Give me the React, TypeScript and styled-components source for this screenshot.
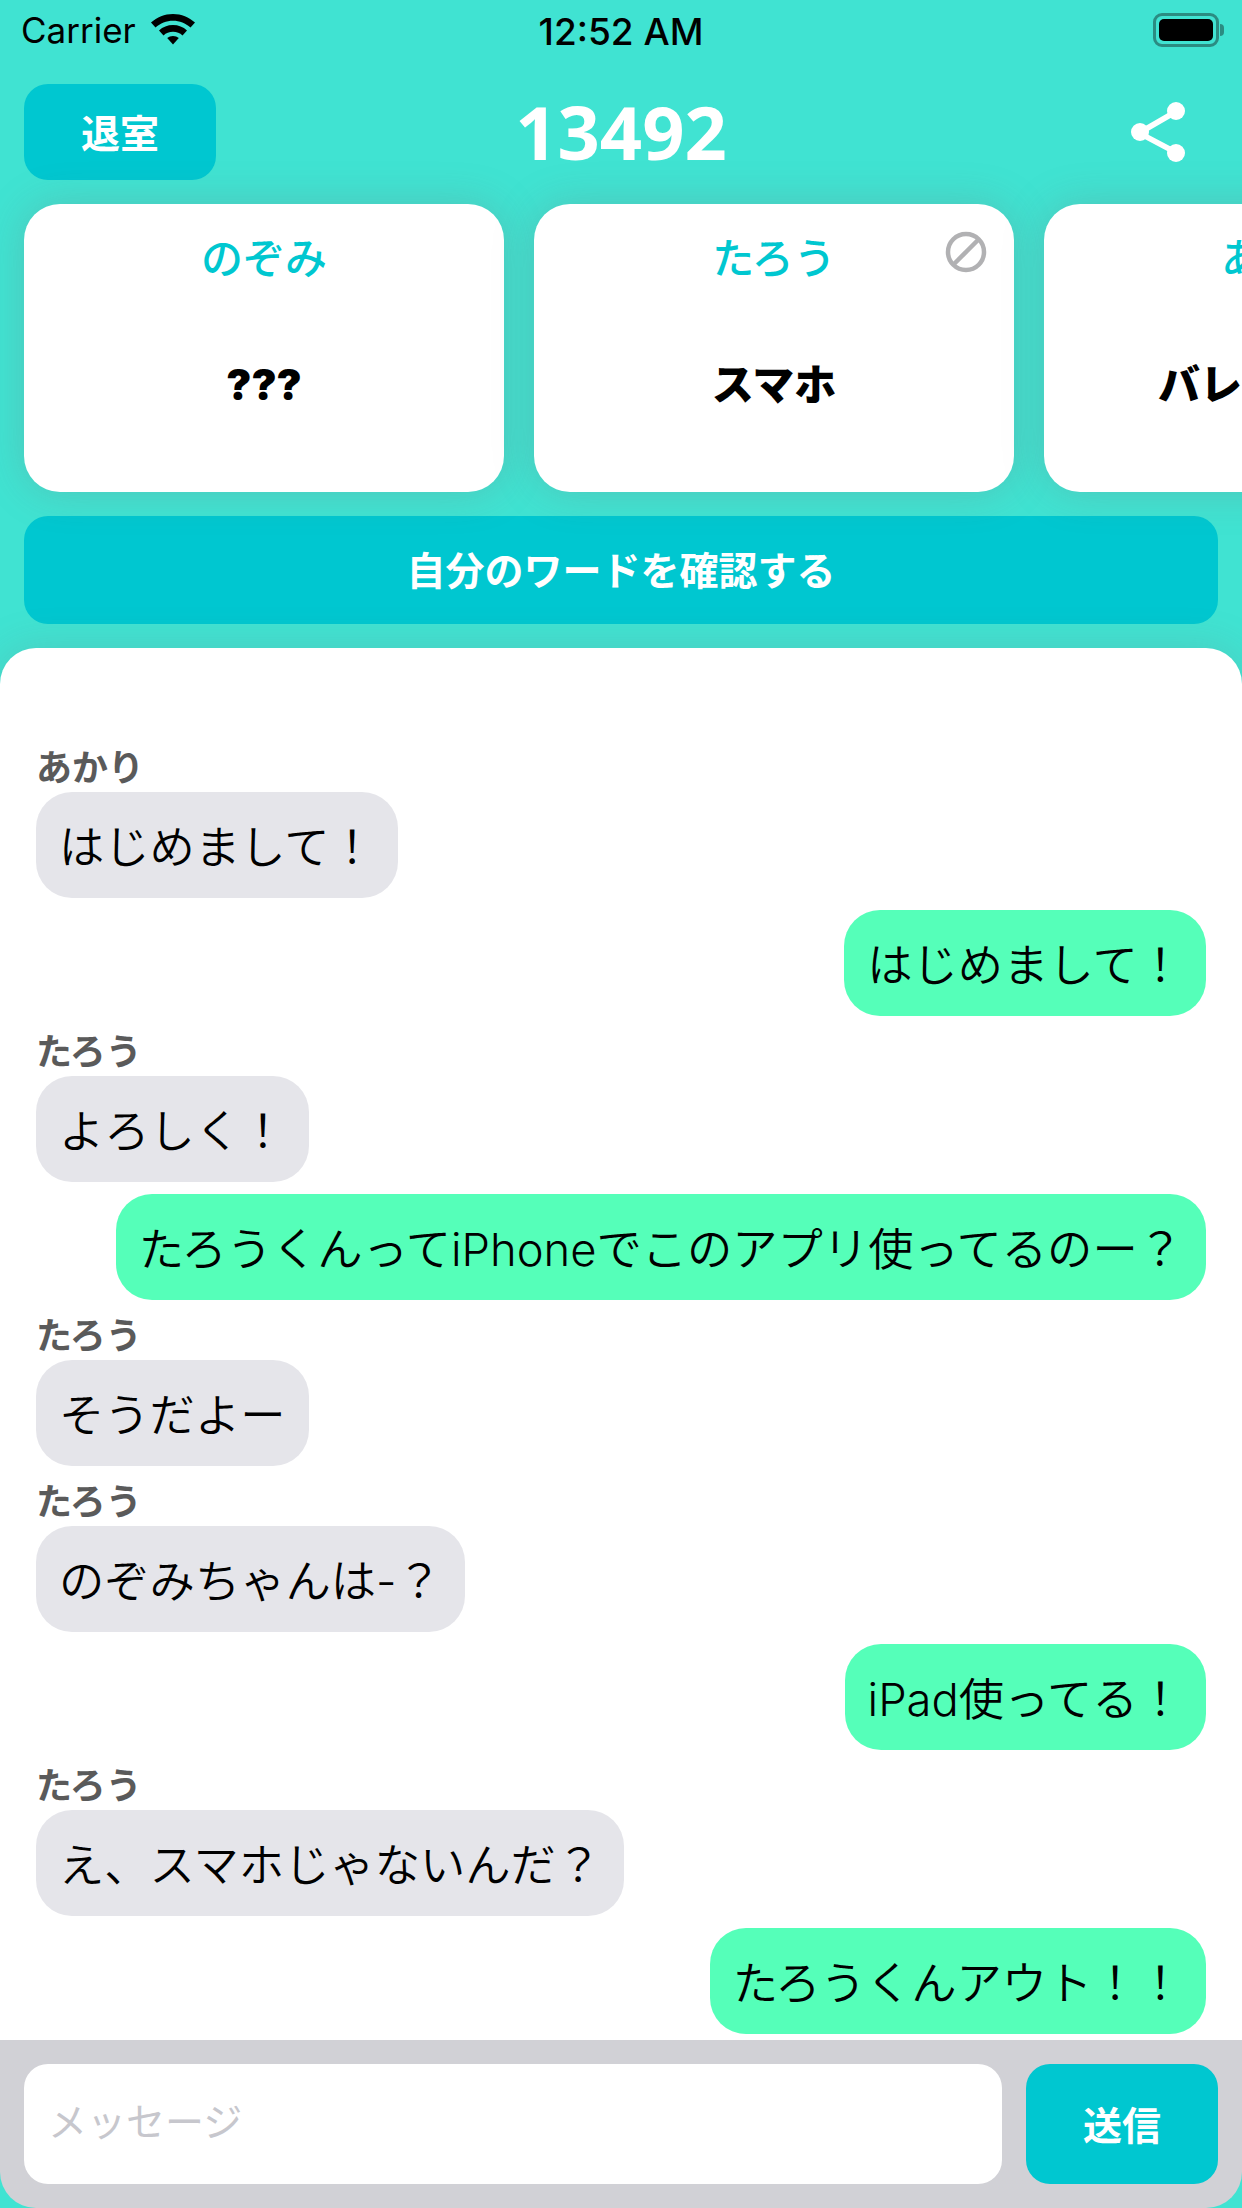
import styled, { createGlobalStyle } from "styled-components";

const TEAL = "#00c7d0";
const CJK = '"Inter", "Noto Sans CJK JP", sans-serif';

const players = [
  { name: "のぞみ", word: "???", banned: false },
  { name: "たろう", word: "スマホ", banned: true },
  { name: "あかり", word: "バレーボール", banned: false },
];

const messages = [
  { name: "あかり", text: "はじめまして！" },
  { text: "はじめまして！", mine: true },
  { name: "たろう", text: "よろしく！" },
  { text: "たろうくんってiPhoneでこのアプリ使ってるのー？", mine: true },
  { name: "たろう", text: "そうだよー" },
  { name: "たろう", text: "のぞみちゃんは-？" },
  { text: "iPad使ってる！", mine: true },
  { name: "たろう", text: "え、スマホじゃないんだ？" },
  { text: "たろうくんアウト！！", mine: true },
];

export default function App() {
  return (
    <Screen>
      <GlobalStyle />
      <StatusBar>
        <Carrier>
          Carrier
          <svg width="46" height="34" viewBox="0 0 46 34" fill="#000">
            <path d="M23 2C14.500 2 7 5.300 1 10.500L5.500 15.500C10.300 11.300 16.400 8.800 23 8.800C29.600 8.800 35.700 11.300 40.500 15.500L45 10.500C39 5.300 31.500 2 23 2Z" />
            <path d="M23 13C17.600 13 12.800 15 9 18.400L13.500 23.400C16 21.200 19.300 19.800 23 19.800C26.700 19.800 30 21.200 32.500 23.400L37 18.400C33.200 15 28.400 13 23 13Z" />
            <path d="M23 24C20.800 24 18.800 24.800 17.200 26.100L23 32.500L28.800 26.100C27.200 24.800 25.200 24 23 24Z" />
          </svg>
        </Carrier>
        <Clock>12:52 AM</Clock>
        <Battery>
          <BatteryFill />
          <BatteryCap />
        </Battery>
      </StatusBar>

      <Header>
        <LeaveButton>退室</LeaveButton>
        <RoomNumber>13492</RoomNumber>
        <ShareIcon width="60" height="62" viewBox="0 0 60 62">
          <g stroke="#fff" strokeWidth="5.500" fill="none">
            <path d="M49 10L11 32L49 52" />
          </g>
          <g fill="#fff">
            <circle cx="48" cy="10" r="9" />
            <circle cx="12" cy="31" r="9" />
            <circle cx="48" cy="52" r="9" />
          </g>
        </ShareIcon>
      </Header>

      <CardRow>
        {players.map((player) => (
          <Card key={player.name}>
            <PlayerName>{player.name}</PlayerName>
            <Word>{player.word}</Word>
            {player.banned && (
              <BanIcon width="42" height="42" viewBox="0 0 42 42" fill="none" stroke="#b1b1b3" strokeWidth="4.500">
                <circle cx="21" cy="21" r="18" />
                <path d="M8.500 33.500L33.500 8.500" />
              </BanIcon>
            )}
          </Card>
        ))}
      </CardRow>

      <CheckButton>自分のワードを確認する</CheckButton>

      <ChatPanel>
        <MessageList>
          {messages.map((message, i) => (
            <MessageRow key={i} $mine={!!message.mine}>
              {message.name && <Sender>{message.name}</Sender>}
              <Bubble $mine={!!message.mine}>{message.text}</Bubble>
            </MessageRow>
          ))}
        </MessageList>
      </ChatPanel>

      <Footer>
        <MessageInput>メッセージ</MessageInput>
        <SendButton>送信</SendButton>
      </Footer>
    </Screen>
  );
}

const GlobalStyle = createGlobalStyle`
  html, body {
    margin: 0;
    padding: 0;
    background: #40e3d2;
  }
`;

const Screen = styled.div`
  width: 1242px;
  height: 2208px;
  display: flex;
  flex-direction: column;
  overflow: hidden;
  background: #40e3d2;
  font-family: ${CJK};
`;

const StatusBar = styled.div`
  height: 60px;
  flex: none;
  display: grid;
  grid-template-columns: 1fr auto 1fr;
  align-items: center;
  padding: 0 21px;
  font-size: 35px;
  color: #000;
`;

const Carrier = styled.div`
  display: flex;
  align-items: center;
  gap: 14px;
  height: 60px;

  svg {
    margin-top: -2px;
  }
`;

const Clock = styled.div`
  font-weight: 500;
  font-size: 37px;
  margin-top: 2px;
`;

const Battery = styled.div`
  justify-self: end;
  position: relative;
  width: 66px;
  height: 34px;
  box-sizing: border-box;
  margin-right: 2px;
  border: 3px solid #2b8c82;
  border-radius: 9px;
  padding: 3px;
`;

const BatteryFill = styled.div`
  height: 100%;
  background: #000;
  border-radius: 5px;
`;

const BatteryCap = styled.div`
  position: absolute;
  right: -8px;
  top: 8px;
  width: 4px;
  height: 12px;
  background: #2b8c82;
  border-radius: 0 6px 6px 0;
`;

const Header = styled.div`
  height: 96px;
  flex: none;
  margin-top: 24px;
  padding: 0 24px;
  display: flex;
  align-items: center;
  justify-content: space-between;
  position: relative;
`;

const LeaveButton = styled.div`
  width: 192px;
  height: 96px;
  box-sizing: border-box;
  padding-bottom: 3px;
  background: ${TEAL};
  border-radius: 24px;
  color: #fff;
  font-size: 39px;
  font-weight: 700;
  display: flex;
  align-items: center;
  justify-content: center;
`;

const RoomNumber = styled.div`
  position: absolute;
  left: 0;
  right: 0;
  top: -3px;
  text-align: center;
  color: #fff;
  font-family: "Open Sans", sans-serif;
  font-size: 74px;
  font-weight: 700;
  pointer-events: none;
`;

const ShareIcon = styled.svg`
  margin-right: 30px;
`;

const CardRow = styled.div`
  display: flex;
  gap: 30px;
  flex: none;
  margin-top: 24px;
  padding-left: 24px;
`;

const Card = styled.div`
  position: relative;
  flex: none;
  width: 480px;
  height: 288px;
  box-sizing: border-box;
  padding-top: 27px;
  background: #fff;
  border-radius: 36px;
  box-shadow: 0 0 40px rgba(120, 120, 120, 0.28);
  text-align: center;
`;

const PlayerName = styled.div`
  color: ${TEAL};
  font-size: 42px;
  line-height: 56px;
  font-weight: 500;
`;

const Word = styled.div`
  margin-top: 70px;
  color: #000;
  font-size: 42px;
  line-height: 56px;
  font-weight: 900;
`;

const BanIcon = styled.svg`
  position: absolute;
  top: 27px;
  right: 27px;
`;

const CheckButton = styled.div`
  flex: none;
  height: 108px;
  box-sizing: border-box;
  padding-bottom: 4px;
  margin: 24px 24px 0;
  background: ${TEAL};
  border-radius: 24px;
  color: #fff;
  font-size: 39px;
  font-weight: 700;
  display: flex;
  align-items: center;
  justify-content: center;
`;

const ChatPanel = styled.div`
  flex: 1;
  min-height: 0;
  margin-top: 24px;
  background: #fff;
  border-radius: 36px 36px 0 0;
  box-shadow: 0 0 40px rgba(120, 120, 120, 0.22);
  overflow: hidden;
`;

const MessageList = styled.div`
  display: flex;
  flex-direction: column;
  gap: 12px;
  padding: 96px 36px 0;
`;

const MessageRow = styled.div<{ $mine: boolean }>`
  display: flex;
  flex-direction: column;
  align-items: ${(props) => (props.$mine ? "flex-end" : "flex-start")};
`;

const Sender = styled.div`
  height: 48px;
  line-height: 48px;
  color: #5a5a5a;
  font-size: 36px;
  font-weight: 700;
`;

const Bubble = styled.div<{ $mine: boolean }>`
  height: 106px;
  box-sizing: border-box;
  padding: 0 23px 3px;
  display: flex;
  align-items: center;
  font-size: 45.3px;
  font-weight: 350;
  color: #000;
  white-space: nowrap;
  border-radius: 36px;
  background: ${(props) => (props.$mine ? "#55ffb9" : "#e5e5ea")};
`;

const Footer = styled.div`
  flex: none;
  height: 168px;
  box-sizing: border-box;
  padding: 24px 24px;
  display: flex;
  gap: 24px;
  background: #d1d1d6;
  border-radius: 0 0 36px 36px;
`;

const MessageInput = styled.div`
  flex: 1;
  box-sizing: border-box;
  padding: 0 0 10px 24px;
  background: #fff;
  border-radius: 24px;
  color: #c7c7cd;
  font-size: 39px;
  display: flex;
  align-items: center;
`;

const SendButton = styled.div`
  width: 192px;
  box-sizing: border-box;
  padding-bottom: 3px;
  background: ${TEAL};
  border-radius: 24px;
  color: #fff;
  font-size: 39px;
  font-weight: 700;
  display: flex;
  align-items: center;
  justify-content: center;
`;
